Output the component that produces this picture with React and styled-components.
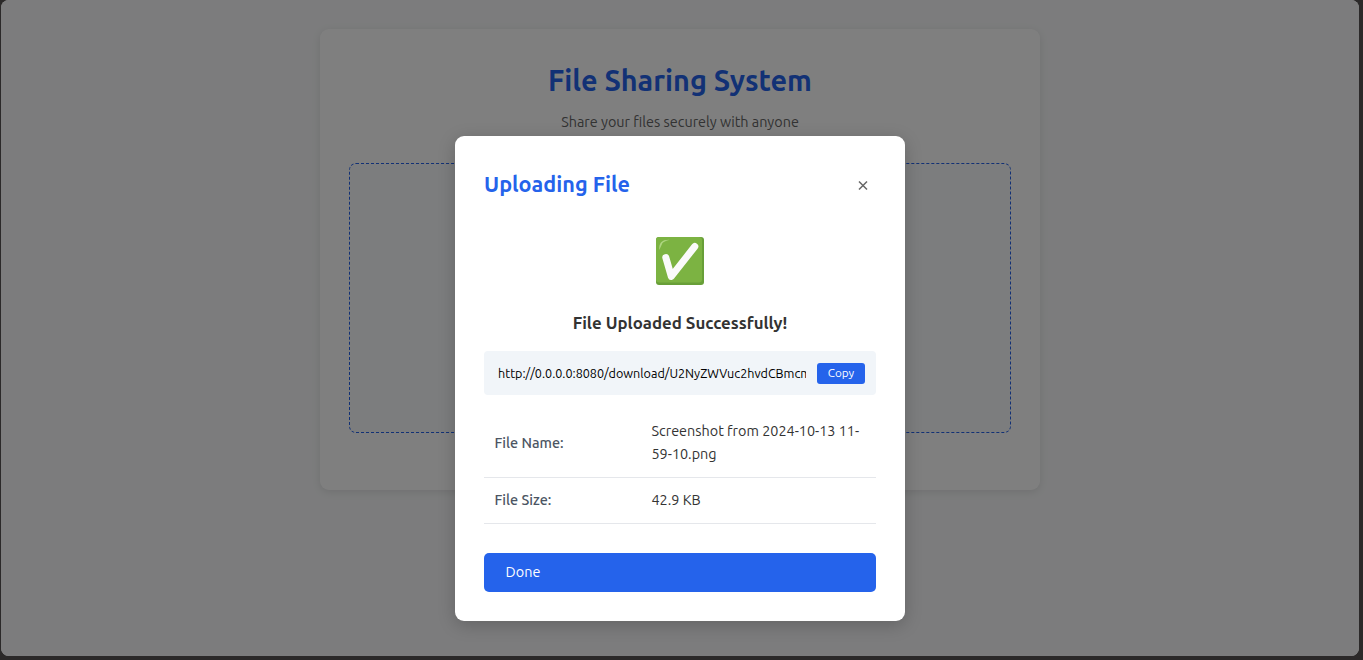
import React from "react";
import styled, { createGlobalStyle } from "styled-components";

const GlobalStyle = createGlobalStyle`
  * { box-sizing: border-box; }
  html, body { margin: 0; background: #2b2929; }
  body {
    height: 660px;
    overflow: hidden;
    font-family: Ubuntu, "Noto Sans", "Open Sans", sans-serif;
    font-size: 14.4px;
    font-weight: 400;
    color: #333;
  }
  h1, h2, h3, p { margin: 0; }
  button { border: 0; font: inherit; cursor: pointer; }
`;

const Window = styled.div`
  position: relative;
  width: 1358px;
  height: 656px;
  margin-left: 1px;
  padding-top: 29px;
  border-radius: 8px;
  overflow: hidden;
  background: #f8f9fa;
`;

const Card = styled.main`
  width: 720px;
  height: 461px;
  margin: 0 auto;
  padding: 29px;
  border-radius: 9px;
  background: #fff;
  box-shadow: 0 2px 9px rgba(0, 0, 0, 0.1);
  text-align: center;
`;

const PageTitle = styled.h1`
  height: 45px;
  line-height: 45px;
  font-size: 28.8px;
  font-weight: 600;
  color: #2563eb;
`;

const Subtitle = styled.p`
  height: 23px;
  margin: 8px 0 29px;
  line-height: 23px;
  color: #666;
`;

const DropZone = styled.div`
  height: 270px;
  border: 1px dashed #2563eb;
  border-radius: 7px;
  background: #f8fafc;
`;

const Overlay = styled.div`
  position: absolute;
  inset: 0;
  display: flex;
  justify-content: center;
  align-items: flex-start;
  padding-top: 136px;
  background: rgba(0, 0, 0, 0.5);
`;

const Modal = styled.section`
  width: 450px;
  height: 485px;
  padding: 29px;
  border-radius: 9px;
  background: #fff;
  box-shadow: 0 4px 18px rgba(0, 0, 0, 0.2);
`;

const ModalHeader = styled.header`
  display: flex;
  justify-content: space-between;
  align-items: center;
  height: 38px;
`;

const ModalTitle = styled.h2`
  font-size: 21.6px;
  font-weight: 600;
  line-height: 38px;
  color: #2563eb;
`;

const CloseButton = styled.button`
  display: flex;
  padding: 8px;
  margin-top: 3px;
  background: none;
  color: #666;
`;

const Status = styled.div`
  display: flex;
  flex-direction: column;
  align-items: center;
  padding-top: 33px;
`;

const StatusTitle = styled.h3`
  height: 28px;
  margin: 23px 0 14px;
  line-height: 28px;
  font-size: 16.85px;
  font-weight: 600;
`;

const LinkBox = styled.div`
  display: flex;
  align-items: center;
  justify-content: space-between;
  height: 44px;
  padding: 0 11px 0 14px;
  border-radius: 4px;
  background: #f1f5f9;
`;

const LinkInput = styled.input`
  width: 308px;
  padding: 0;
  border: 0;
  outline: 0;
  background: none;
  font-family: inherit;
  font-size: 12.6px;
  color: #000;
`;

const CopyButton = styled.button`
  width: 48px;
  height: 21px;
  padding: 0;
  border-radius: 3px;
  background: #2563eb;
  color: #fff;
  font-size: 11.7px;
  line-height: 20px;
`;

const Details = styled.dl`
  margin: 14px 0 29px;
`;

const DetailRow = styled.div`
  display: grid;
  grid-template-columns: 157px 1fr;
  align-items: center;
  height: ${({ $height }) => $height}px;
  border-bottom: 1px solid #e5e7eb;
`;

const DetailLabel = styled.dt`
  padding-left: 10.5px;
  line-height: 23px;
  font-weight: 500;
  color: #4b5563;
`;

const DetailValue = styled.dd`
  margin: 0;
  padding: 0 10.5px;
  line-height: 23px;
`;

const DoneButton = styled.button`
  display: block;
  width: 100%;
  height: 39px;
  padding: 0 21.6px 1px;
  border-radius: 5px;
  background: #2563eb;
  color: #fff;
  text-align: left;
  line-height: 38px;
`;

const CheckIcon = () => (
  <svg width="50" height="50" viewBox="0 0 50 50">
    <rect x="1" y="1" width="48" height="48" rx="3" fill="#689f38" />
    <rect x="1" y="1" width="46" height="45.5" rx="3" fill="#7cb342" />
    <path d="M4.3 14C3.8 7 6.5 3.7 14.5 3.8C11 5.2 8.2 5.2 6.8 8.5Z" fill="#aed581" />
    <path d="M10.8 21.5L16.3 40.4L39.8 10.5" fill="none" stroke="#fafafa" strokeWidth="7" strokeLinecap="round" strokeLinejoin="round" />
  </svg>
);

const CloseIcon = () => (
  <svg width="11" height="11" viewBox="0 0 11 11">
    <path d="M2 1.5L10 9.5M10 1.5L2 9.5" stroke="currentColor" strokeWidth="1.5" />
  </svg>
);

const details = [
  { label: "File Name:", value: "Screenshot from 2024-10-13 11-59-10.png", height: 69 },
  { label: "File Size:", value: "42.9 KB", height: 46 },
];

export default function App() {
  return (
    <>
      <GlobalStyle />
      <Window>
        <Card>
          <PageTitle>File Sharing System</PageTitle>
          <Subtitle>Share your files securely with anyone</Subtitle>
          <DropZone />
        </Card>
        <Overlay>
          <Modal>
            <ModalHeader>
              <ModalTitle>Uploading File</ModalTitle>
              <CloseButton aria-label="Close"><CloseIcon /></CloseButton>
            </ModalHeader>
            <Status>
              <CheckIcon />
              <StatusTitle>File Uploaded Successfully!</StatusTitle>
            </Status>
            <LinkBox>
              <LinkInput readOnly value="http://0.0.0.0:8080/download/U2NyZWVuc2hvdCBmcm9t" />
              <CopyButton>Copy</CopyButton>
            </LinkBox>
            <Details>
              {details.map(({ label, value, height }) => (
                <DetailRow key={label} $height={height}>
                  <DetailLabel>{label}</DetailLabel>
                  <DetailValue>{value}</DetailValue>
                </DetailRow>
              ))}
            </Details>
            <DoneButton>Done</DoneButton>
          </Modal>
        </Overlay>
      </Window>
    </>
  );
}
